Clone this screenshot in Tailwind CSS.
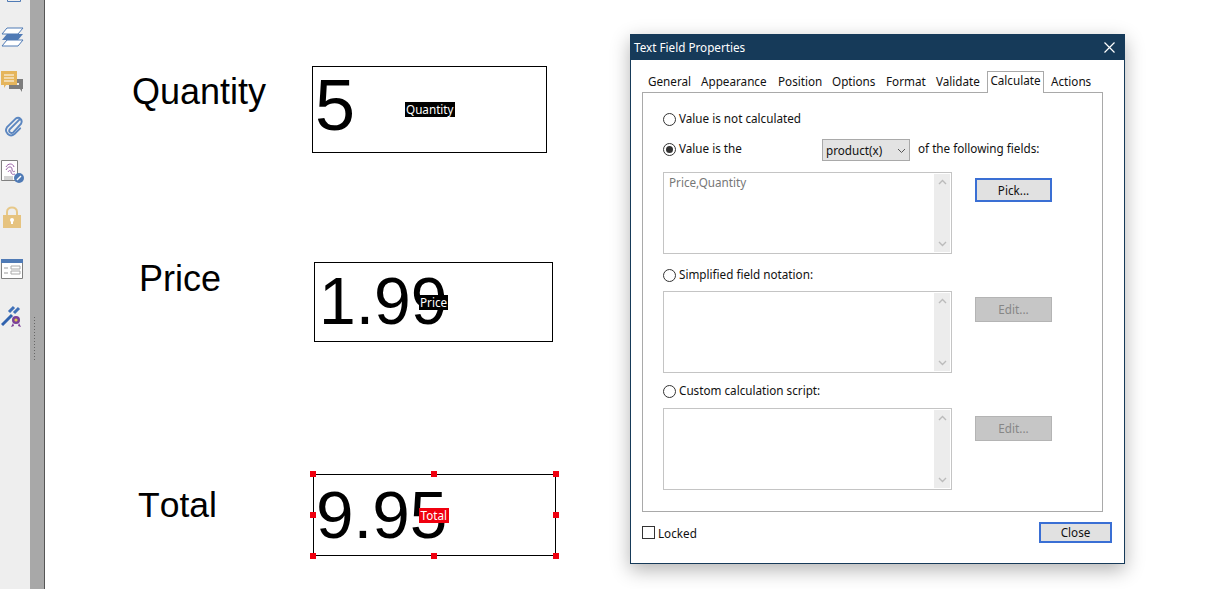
<!doctype html>
<html lang="en">
  <head>
    <meta charset="UTF-8" />
    <script src="https://cdn.jsdelivr.net/npm/@tailwindcss/browser@4"></script>
    <title>Text Field Properties</title>
  </head>

  <body class="relative h-[589px] w-[1213px] overflow-hidden bg-white font-['Liberation_Sans',sans-serif] text-black">
    <div class="flex h-full">
      <!-- left rail -->
      <div class="flex h-full w-[30px] shrink-0 flex-col items-start bg-[#eeeeee]">
        <svg class="-mt-px ml-[7px] h-[3px] w-[14px]" viewBox="0 0 14 3"><path d="M.5 0v2.500h13V0" fill="none" stroke="#4f7ab5"/></svg>
        <svg class="ml-px mt-[25px] h-[20px] w-[23px]" viewBox="0 0 23 20">
          <path d="M6 1h16l-5 6H1z" fill="#fff" stroke="#4f7ab5"/>
          <path d="M6 7h16l-5 6H1z" fill="#4f7ab5"/>
          <path d="M6 13h16l-5 6H1z" fill="#fff" stroke="#4f7ab5"/>
        </svg>
        <svg class="ml-px mt-[24px] h-[22px] w-[22px]" viewBox="0 0 22 22">
          <path d="M8 8h14v10h-1v3l-2-3H8z" fill="#7d7d7d"/>
          <path d="M11 12h7v2h-7z" fill="#eee"/>
          <path d="M0 0h16v14H5l-2 3v-3H0z" fill="#e5b55c"/>
          <path d="M3 4h10M3 7h10M3 10h10" stroke="#fff"/>
        </svg>
        <svg class="ml-[3px] mt-[23px] h-[22px] w-[20px]" viewBox="0 0 20 22">
          <path d="M17 3 6 14c-2 3 2 5 4 3l8-9c2-4-2-8-6-5L3 12c-3 5 3 11 8 7l6-6" fill="none" stroke="#5b86c0" stroke-width="2" stroke-linecap="round" transform="translate(1 0) scale(.95)"/>
        </svg>
        <svg class="ml-px mt-[22px] h-[24px] w-[23px]" viewBox="0 0 23 24">
          <path d="M.5.500h16v20H.5z" fill="#fff" stroke="#808080"/>
          <path d="M5 7c2-4 7-4 8 0M5 10c2-4 6-4 6-1 0 3 2 3 3 2M7 12c1-2 3-2 3 0 0 2 2 3 4 2" fill="none" stroke="#9a62a8"/>
          <path d="M3 17h9M3 19h9" stroke="#aaa"/>
          <circle cx="18" cy="18" r="5" fill="#4f7ab5"/>
          <path d="M16 20l4-4" stroke="#fff" stroke-width="1.500"/>
        </svg>
        <svg class="ml-[3px] mt-[22px] h-[23px] w-[18px]" viewBox="0 0 18 23">
          <path d="M4 10V6c0-6 10-6 10 0v4" fill="none" stroke="#e7c888" stroke-width="2"/>
          <path d="M0 9h18v13H0z" fill="#e6c37f"/>
          <circle cx="9" cy="14" r="2" fill="#fff"/>
          <path d="M8 15h2v3H8z" fill="#fff"/>
        </svg>
        <svg class="ml-px mt-[30px] h-[20px] w-[22px]" viewBox="0 0 22 20">
          <path d="M.5.500h21v19H.5z" fill="#fff" stroke="#808080"/>
          <path d="M0 0h22v4H0z" fill="#4f7ab5"/>
          <path d="M3 9h4M3 14h4" stroke="#999"/>
          <path d="M10 7h9v3h-9zM10 12h9v3h-9z" fill="none" stroke="#aaa"/>
        </svg>
        <svg class="ml-px mt-[26px] h-[23px] w-[22px]" viewBox="0 0 22 23">
          <path d="M1 20 11 10" stroke="#2f62ae" stroke-width="3"/>
          <path d="M8 7l5-5M13 8l5-5" stroke="#3f70b8" stroke-width="3"/>
          <circle cx="15" cy="15" r="4" fill="#7b3f98"/>
          <circle cx="15" cy="15" r="1.600" fill="#e5c84e"/>
          <path d="M12 18l-2 4 3-1M18 18l2 4-3-1" fill="#7b3f98"/>
        </svg>
      </div>

      <!-- splitter -->
      <div class="relative h-full w-[15px] shrink-0 border-r border-r-[#555555] bg-[#a8a8a8]">
        <div class="absolute left-[3px] top-[316px] h-[45px] w-[3px] bg-[radial-gradient(circle,#666666_1px,transparent_1px)] bg-[length:3px_3px]"></div>
      </div>
    </div>

    <!-- form fields on the page -->
    <div class="absolute left-[132px] top-[71px] text-[36px] leading-[41px]">Quantity</div>
    <div class="absolute left-[312px] top-[66px] h-[87px] w-[235px] border border-black">
      <span class="absolute left-[2px] top-[-3px] text-[72px] leading-[83px]">5</span>
      <span class="absolute left-[92px] top-[35px] bg-black px-px font-['Noto_Sans',sans-serif] text-[11.700px] leading-[15px] text-white">Quantity</span>
    </div>

    <div class="absolute left-[139px] top-[259px] text-[36px] leading-[40px]">Price</div>
    <div class="absolute left-[314px] top-[262px] h-[80px] w-[239px] border border-black">
      <span class="absolute left-[4px] top-[-2px] text-[66px] leading-[80px]">1.99</span>
      <span class="absolute left-[104px] top-[32px] bg-black px-px font-['Noto_Sans',sans-serif] text-[11.700px] leading-[15px] text-white">Price</span>
    </div>

    <div class="absolute left-[138px] top-[485px] text-[35.500px] leading-[41px] [font-kerning:none]">Total</div>
    <div class="absolute left-[313px] top-[474px] h-[82px] w-[243px] border border-black">
      <span class="absolute left-[2px] top-0 text-[67.500px] leading-[80px]">9.95</span>
      <span class="absolute left-[105px] top-[33px] bg-[#f0000f] px-[1.500px] font-['Noto_Sans',sans-serif] text-[11.700px] leading-[15px] text-white">Total</span>
      <i class="absolute -left-[4px] -top-[4px] size-[6px] bg-[#f0000f]"></i>
      <i class="absolute left-[117px] -top-[4px] size-[6px] bg-[#f0000f]"></i>
      <i class="absolute -right-[4px] -top-[4px] size-[6px] bg-[#f0000f]"></i>
      <i class="absolute -left-[4px] top-[37px] size-[6px] bg-[#f0000f]"></i>
      <i class="absolute -right-[4px] top-[37px] size-[6px] bg-[#f0000f]"></i>
      <i class="absolute -left-[4px] -bottom-[4px] size-[6px] bg-[#f0000f]"></i>
      <i class="absolute left-[117px] -bottom-[4px] size-[6px] bg-[#f0000f]"></i>
      <i class="absolute -right-[4px] -bottom-[4px] size-[6px] bg-[#f0000f]"></i>
    </div>

    <!-- dialog window -->
    <div class="absolute left-[630px] top-[34px] flex h-[530px] w-[495px] flex-col border border-[#163a59] bg-white font-['Noto_Sans',sans-serif] text-[11.700px] leading-[16px] text-[#111111] shadow-[0_6px_18px_rgba(0,0,0,0.3)]">
      <div class="flex h-[25px] shrink-0 items-center justify-between bg-[#163a59] pl-[3px] pr-[9px] text-white">
        <span class="mb-[2px]">Text Field Properties</span>
        <svg class="size-[11px]" viewBox="0 0 11 11"><path d="M.5.500l10 10M10.500.500l-10 10" stroke="#fff" stroke-width="1.200"/></svg>
      </div>

      <div class="flex flex-col pl-[11px] pr-[12px] pt-[11px]">
        <!-- tabs -->
        <div class="relative z-10 flex h-[22px] items-end pl-[6px]">
          <span class="mb-[4px] w-[53px]">General</span>
          <span class="mb-[4px] w-[77px]">Appearance</span>
          <span class="mb-[4px] w-[54px]">Position</span>
          <span class="mb-[4px] w-[54px]">Options</span>
          <span class="mb-[4px] w-[50px]">Format</span>
          <span class="mb-[4px] w-[51px]">Validate</span>
          <span class="flex h-[22px] w-[57px] justify-center border border-b-0 border-[#a9a9a9] bg-white">Calculate</span>
          <span class="mb-[4px] ml-[7px]">Actions</span>
        </div>

        <!-- panel -->
        <div class="-mt-px flex h-[420px] w-[461px] flex-col border border-[#a9a9a9] pl-[20px] pt-[18px]">
          <div class="flex h-[16px] items-center gap-[3px]">
            <span class="size-[13px] rounded-full border border-[#333333]"></span>
            <span class="mb-[2px]">Value is not calculated</span>
          </div>
          <div class="mt-[14px] flex h-[16px] items-center">
            <span class="flex size-[13px] items-center justify-center rounded-full border border-[#333333]"><span class="size-[7px] rounded-full bg-[#333333]"></span></span>
            <span class="mb-[2px] ml-[3px] w-[143px]">Value is the</span>
            <span class="mt-[2px] flex h-[22px] w-[88px] items-center justify-between border border-[#a9a9a9] bg-[#e3e3e3] pl-[3px] pr-[3px]">
              product(x)
              <svg class="size-[9px]" viewBox="0 0 9 9"><path d="M1 3l3.500 3.500L8 3" fill="none" stroke="#555555"/></svg>
            </span>
            <span class="mb-[2px] ml-[8px]">of the following fields:</span>
          </div>

          <div class="mt-[15px] flex items-start">
            <div class="flex h-[82px] w-[289px] justify-between border border-[#c4c4c4] p-px pl-[5px] text-[#777777]">
              <span>Price,Quantity</span>
              <div class="flex w-[16px] flex-col items-center justify-between bg-[#ececec] py-[4px]">
                <svg class="size-[9px]" viewBox="0 0 9 9"><path d="M1 6l3.500-3.500L8 6" fill="none" stroke="#bbbbbb" stroke-width="1.400"/></svg>
                <svg class="size-[9px]" viewBox="0 0 9 9"><path d="M1 3l3.500 3.500L8 3" fill="none" stroke="#bbbbbb" stroke-width="1.400"/></svg>
              </div>
            </div>
            <button class="ml-[23px] mt-[6px] flex h-[24px] w-[77px] items-center justify-center border-2 border-[#3a6fd4] bg-[#e1e1e1]">Pick...</button>
          </div>

          <div class="mt-[13px] flex h-[16px] items-center gap-[3px]">
            <span class="size-[13px] rounded-full border border-[#333333]"></span>
            <span class="mb-[2px]">Simplified field notation:</span>
          </div>
          <div class="mt-[8px] flex items-start">
            <div class="flex h-[82px] w-[289px] justify-end border border-[#c4c4c4] p-px">
              <div class="flex w-[16px] flex-col items-center justify-between bg-[#ececec] py-[4px]">
                <svg class="size-[9px]" viewBox="0 0 9 9"><path d="M1 6l3.500-3.500L8 6" fill="none" stroke="#bbbbbb" stroke-width="1.400"/></svg>
                <svg class="size-[9px]" viewBox="0 0 9 9"><path d="M1 3l3.500 3.500L8 3" fill="none" stroke="#bbbbbb" stroke-width="1.400"/></svg>
              </div>
            </div>
            <button class="ml-[23px] mt-[6px] flex h-[25px] w-[77px] items-center justify-center border border-[#b4b4b4] bg-[#c6c6c6] pb-[2px] text-[#868686]">Edit...</button>
          </div>

          <div class="mt-[10px] flex h-[16px] items-center gap-[3px]">
            <span class="size-[13px] rounded-full border border-[#333333]"></span>
            <span class="mb-[2px]">Custom calculation script:</span>
          </div>
          <div class="mt-[9px] flex items-start">
            <div class="flex h-[82px] w-[289px] justify-end border border-[#c4c4c4] p-px">
              <div class="flex w-[16px] flex-col items-center justify-between bg-[#ececec] py-[4px]">
                <svg class="size-[9px]" viewBox="0 0 9 9"><path d="M1 6l3.500-3.500L8 6" fill="none" stroke="#bbbbbb" stroke-width="1.400"/></svg>
                <svg class="size-[9px]" viewBox="0 0 9 9"><path d="M1 3l3.500 3.500L8 3" fill="none" stroke="#bbbbbb" stroke-width="1.400"/></svg>
              </div>
            </div>
            <button class="ml-[23px] mt-[8px] flex h-[25px] w-[77px] items-center justify-center border border-[#b4b4b4] bg-[#c6c6c6] pb-[2px] text-[#868686]">Edit...</button>
          </div>
        </div>

        <!-- footer -->
        <div class="mt-[10px] flex items-center justify-between">
          <div class="flex items-center gap-[3px]">
            <span class="size-[13px] border border-[#333333]"></span>
            <span>Locked</span>
          </div>
          <button class="flex h-[21px] w-[73px] items-center justify-center border-2 border-[#3a6fd4] bg-[#e1e1e1] pb-[2px]">Close</button>
        </div>
      </div>
    </div>
  </body>
</html>
